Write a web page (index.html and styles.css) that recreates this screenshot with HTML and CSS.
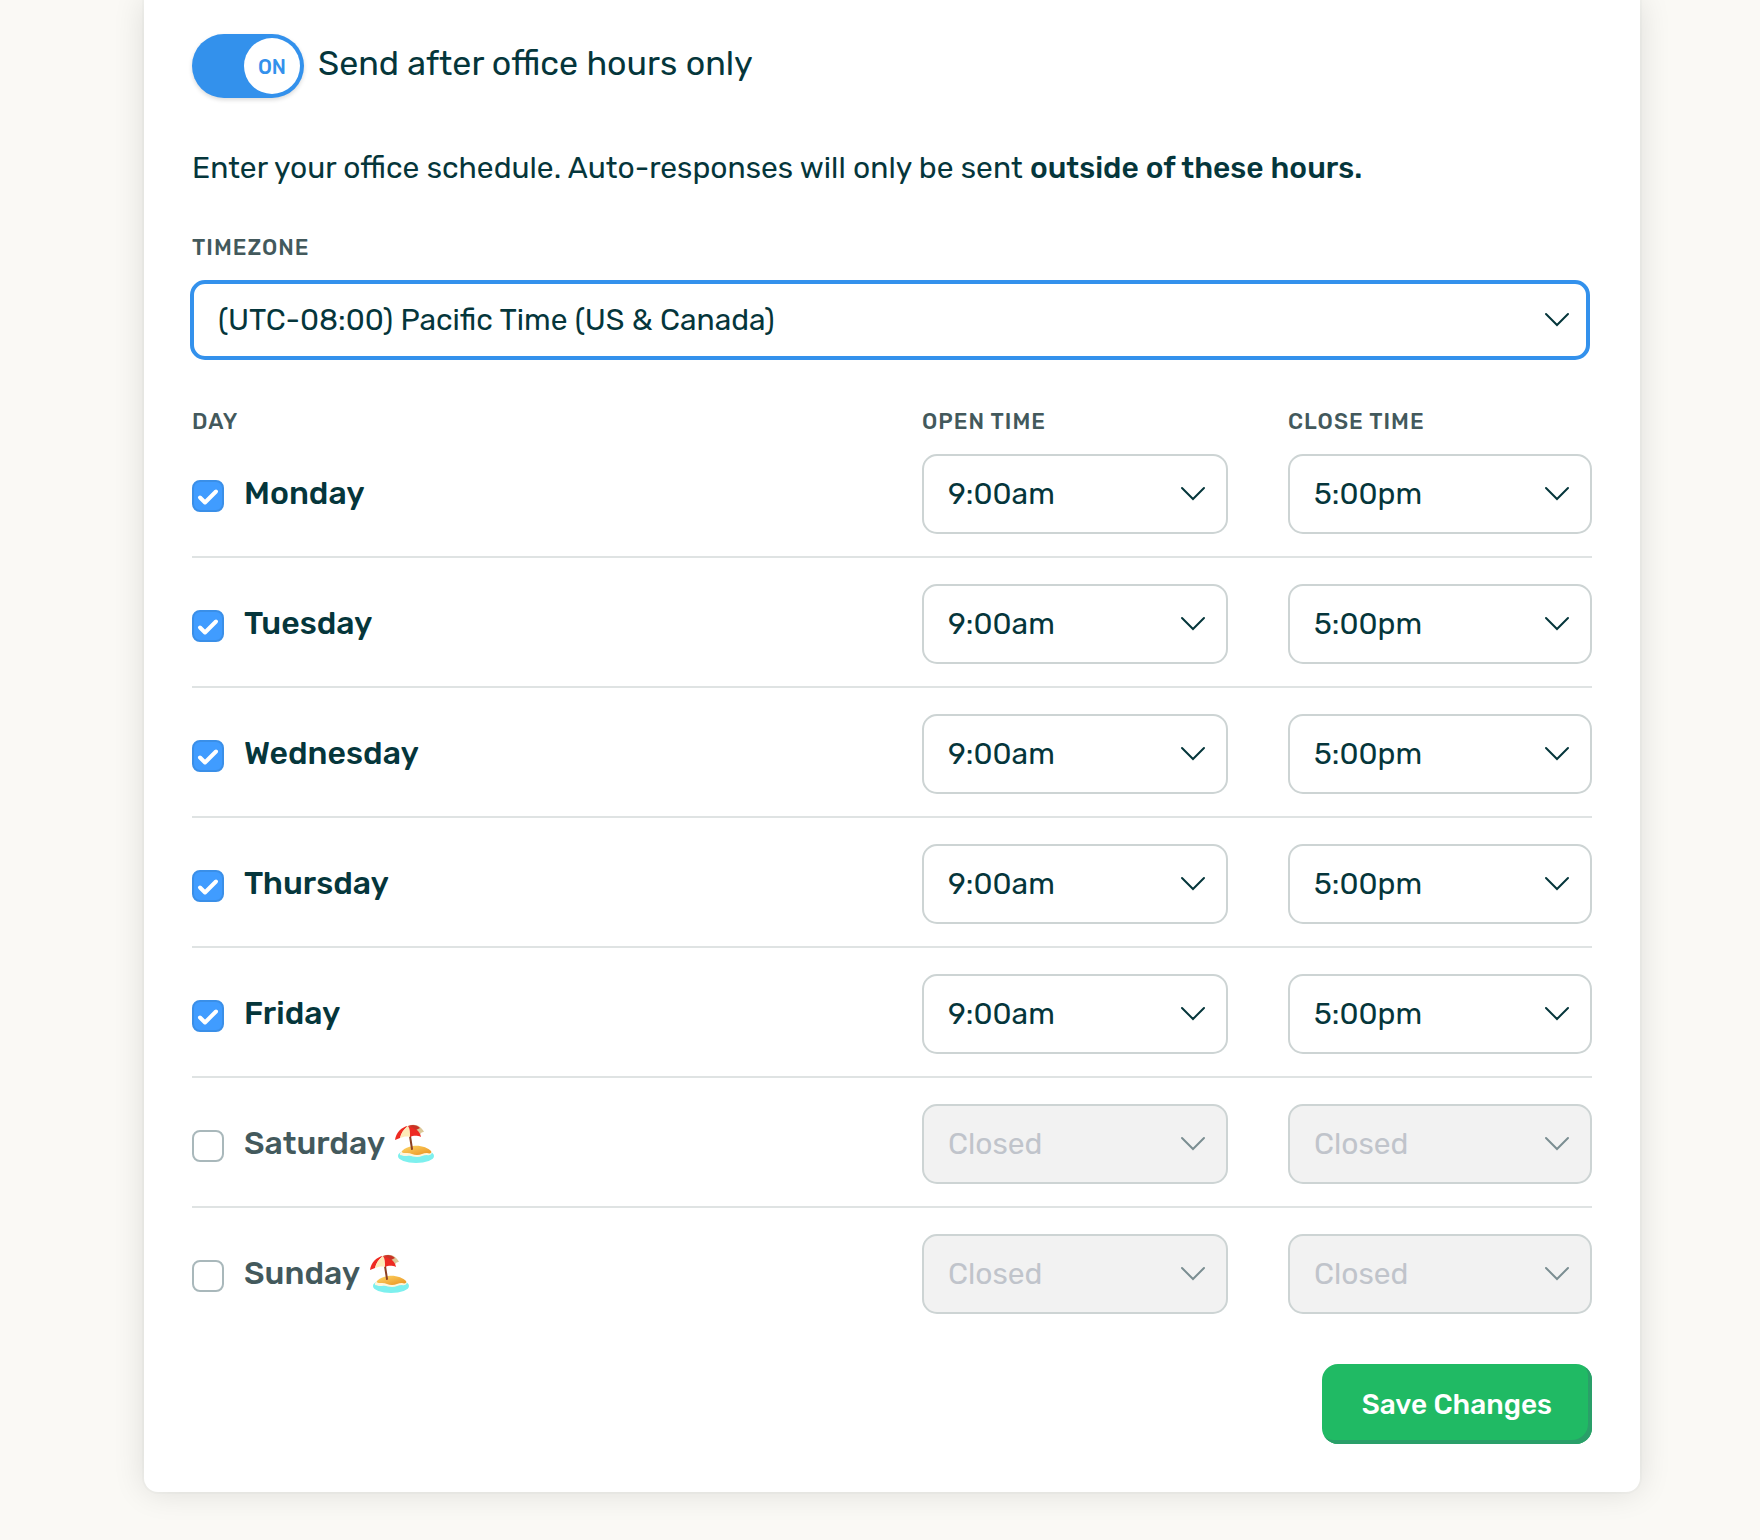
FILE: index.html
```html
<!DOCTYPE html>
<html lang="en">

<head>
  <meta charset="utf-8">
  <meta name="viewport" content="width=device-width, initial-scale=1">
  <title>Office Hours</title>
  <link rel="stylesheet" href="styles.css">
</head>

<body>
  <!-- umbrella icon shared by the weekend rows -->
  <svg class="sprite" aria-hidden="true">
    <defs>
      <linearGradient id="sand" x1="0" y1="0" x2="1" y2="1">
        <stop offset="0" stop-color="#ffd766"/>
        <stop offset="1" stop-color="#e8901f"/>
      </linearGradient>
    </defs>
    <symbol id="beach" viewBox="0 0 40 40">
      <ellipse cx="21" cy="32" rx="18" ry="7" fill="#7df0ee"/>
      <path d="M5 29c2-3 6-5 12-6 8-1 16 1 19 4 2 2 0 5-4 4-4 0-6 2-10 2-4 0-6-2-10-1-4 0-8 0-7-3z" fill="#fff6dc"/>
      <path d="M7 27c3-3 6-4 11-5 8-1 15 2 18 5 1 2-1 3-4 2-4 0-6 2-10 2s-6-2-10-2c-3 0-6 0-5-2z" fill="url(#sand)"/>
      <path d="M15 12l2 13" stroke="#8c3f22" stroke-width="2" stroke-linecap="round"/>
      <path d="M13 2c7-3 13 0 16 6-1 0-2 0-3 1l-2 3z" fill="#dcc797"/>
      <path d="M13 2C6 3 1 9 0 16l5-2c1-5 4-9 8-12z" fill="#ee2a22"/>
      <path d="M13 2C9 5 6 9 5 14c3-1 6-2 10-1 0-5 0-8-2-11z" fill="#fdeab8"/>
      <path d="M13 2c2 3 2 6 2 11 3-1 6-2 11 0-1-6-6-10-13-11z" fill="#ee2a22"/>
      <path d="M13 2c5-2 9-1 12 2l-4 2c-2-2-5-3-8-4z" fill="#c93326"/>
    </symbol>
  </svg>

  <form class="card">
    <div class="toggle-row">
      <span class="toggle">
        <input class="toggle-input" type="checkbox" role="switch" id="afterHours" checked>
        <span class="toggle-knob">ON</span>
      </span>
      <label class="toggle-label" for="afterHours">Send after office hours only</label>
    </div>

    <p class="intro">Enter your office schedule. Auto-responses will only be sent <strong>outside of these hours.</strong></p>

    <label class="caption" for="timezone">TIMEZONE</label>
    <select class="select select-active" id="timezone">
      <option>(UTC-08:00) Pacific Time (US &amp; Canada)</option>
    </select>

    <table class="schedule">
      <colgroup>
        <col>
        <col class="col-open">
        <col class="col-close">
      </colgroup>
      <thead>
        <tr>
          <th class="caption">DAY</th>
          <th class="caption">OPEN TIME</th>
          <th class="caption">CLOSE TIME</th>
        </tr>
      </thead>
      <tbody>
        <tr>
          <td><label class="day"><input class="check" type="checkbox" checked><span>Monday</span></label></td>
          <td class="open"><select class="select" aria-label="Monday open time"><option>9:00am</option></select></td>
          <td><select class="select" aria-label="Monday close time"><option>5:00pm</option></select></td>
        </tr>
        <tr>
          <td><label class="day"><input class="check" type="checkbox" checked><span>Tuesday</span></label></td>
          <td class="open"><select class="select" aria-label="Tuesday open time"><option>9:00am</option></select></td>
          <td><select class="select" aria-label="Tuesday close time"><option>5:00pm</option></select></td>
        </tr>
        <tr>
          <td><label class="day"><input class="check" type="checkbox" checked><span>Wednesday</span></label></td>
          <td class="open"><select class="select" aria-label="Wednesday open time"><option>9:00am</option></select></td>
          <td><select class="select" aria-label="Wednesday close time"><option>5:00pm</option></select></td>
        </tr>
        <tr>
          <td><label class="day"><input class="check" type="checkbox" checked><span>Thursday</span></label></td>
          <td class="open"><select class="select" aria-label="Thursday open time"><option>9:00am</option></select></td>
          <td><select class="select" aria-label="Thursday close time"><option>5:00pm</option></select></td>
        </tr>
        <tr>
          <td><label class="day"><input class="check" type="checkbox" checked><span>Friday</span></label></td>
          <td class="open"><select class="select" aria-label="Friday open time"><option>9:00am</option></select></td>
          <td><select class="select" aria-label="Friday close time"><option>5:00pm</option></select></td>
        </tr>
        <tr>
          <td><label class="day day-off"><input class="check" type="checkbox"><span>Saturday</span><svg class="beach" aria-hidden="true"><use href="#beach"/></svg></label></td>
          <td class="open"><select class="select" aria-label="Saturday open time" disabled><option>Closed</option></select></td>
          <td><select class="select" aria-label="Saturday close time" disabled><option>Closed</option></select></td>
        </tr>
        <tr>
          <td><label class="day day-off"><input class="check" type="checkbox"><span>Sunday</span><svg class="beach" aria-hidden="true"><use href="#beach"/></svg></label></td>
          <td class="open"><select class="select" aria-label="Sunday open time" disabled><option>Closed</option></select></td>
          <td><select class="select" aria-label="Sunday close time" disabled><option>Closed</option></select></td>
        </tr>
      </tbody>
    </table>

    <div class="actions">
      <button class="save" type="submit">Save Changes</button>
    </div>
  </form>
</body>

</html>
```
FILE: styles.css
```css
* {
  box-sizing: border-box;
}

body {
  margin: 0;
  padding: 0 120px 48px 144px;
  background-color: #faf9f5;
  color: #05363b;
  font-family: Rubik, Roboto, sans-serif;
  font-size: 30px;
  line-height: 40px;
}

.sprite {
  position: absolute;
  width: 0;
  height: 0;
}

.card {
  padding: 34px 48px 48px;
  background-color: #fff;
  border-radius: 0 0 14px 14px;
  box-shadow: 0 0 0 2px rgba(5, 54, 59, 0.02), 0 0 32px rgba(0, 0, 0, 0.12);
}

/* on/off switch */
.toggle-row {
  display: flex;
  align-items: center;
  gap: 14px;
}

.toggle {
  position: relative;
  width: 112px;
  height: 64px;
}

.toggle-input {
  appearance: none;
  display: block;
  width: 100%;
  height: 100%;
  margin: 0;
  border-radius: 32px;
  background-color: #3391ec;
  box-shadow: 0 2px 4px rgba(0, 0, 0, 0.15);
}

.toggle-knob {
  position: absolute;
  top: 4px;
  right: 4px;
  width: 56px;
  padding-top: 2px;
  border-radius: 50%;
  background-color: #fff;
  color: #3391ec;
  font-size: 20px;
  font-weight: 500;
  line-height: 54px;
  text-align: center;
  pointer-events: none;
}

.toggle-label {
  padding-bottom: 4px;
  font-size: 34px;
}

.intro {
  margin: 50px 0 48px;
}

.intro strong {
  font-weight: 500;
}

.caption {
  display: block;
  color: #43595c;
  font-size: 22px;
  font-weight: 500;
  letter-spacing: 1px;
  line-height: 24px;
  text-align: left;
}

/* drop-downs */
.select {
  appearance: none;
  display: block;
  width: 100%;
  height: 80px;
  padding: 0 60px 0 24px;
  border: 2px solid #cdd4d4;
  border-radius: 15px;
  background: #fff url("data:image/svg+xml,%3Csvg xmlns='http://www.w3.org/2000/svg' width='26' height='16'%3E%3Cpath d='M2 2l11 11L24 2' fill='none' stroke='%2305363b' stroke-width='2' stroke-linecap='round'/%3E%3C/svg%3E") no-repeat right 20px top 30px;
  color: #05363b;
  font: inherit;
}

.select:disabled {
  background-color: #f2f2f2;
  background-image: url("data:image/svg+xml,%3Csvg xmlns='http://www.w3.org/2000/svg' width='26' height='16'%3E%3Cpath d='M2 2l11 11L24 2' fill='none' stroke='%237b8e92' stroke-width='2' stroke-linecap='round'/%3E%3C/svg%3E");
  color: #c0c4cb;
  opacity: 1;
}

.select-active {
  margin: 20px 0 50px -2px;
  border: 4px solid #3391ec;
  background-position: right 16px top 28px;
}

/* schedule */
.schedule {
  width: 100%;
  border-collapse: collapse;
  table-layout: fixed;
}

.col-open {
  width: 366px;
}

.col-close {
  width: 304px;
}

.schedule th {
  display: table-cell;
  padding: 0;
}

.schedule td {
  padding: 26px 0 22px;
  border-bottom: 2px solid #dfe3e3;
}

.schedule tr:first-child td {
  padding-top: 20px;
}

.schedule tr:last-child td {
  padding-bottom: 0;
  border-bottom: none;
}

.schedule .open {
  padding-right: 60px;
}

.day {
  display: flex;
  align-items: center;
  font-size: 32px;
  font-weight: 500;
}

.day span {
  padding-bottom: 2px;
}

.day-off {
  color: #43595c;
}

.check {
  appearance: none;
  width: 32px;
  height: 32px;
  margin: 4px 20px 0 0;
  border: 2px solid #a9b8bb;
  border-radius: 8px;
  background-color: #fff;
}

.check:checked {
  border-color: #3a8fe8;
  background: #409cff url("data:image/svg+xml,%3Csvg xmlns='http://www.w3.org/2000/svg' width='28' height='28'%3E%3Cpath d='M6 15.500l5 5L22 9.500' fill='none' stroke='%23fff' stroke-width='4' stroke-linecap='round' stroke-linejoin='round'/%3E%3C/svg%3E") no-repeat center;
}

.beach {
  width: 40px;
  height: 40px;
  margin-left: 10px;
}

.actions {
  display: flex;
  justify-content: flex-end;
  margin-top: 50px;
}

.save {
  height: 80px;
  padding: 2px 40px 0;
  border: none;
  border-radius: 16px;
  background-color: #20ba64;
  box-shadow: inset -4px -4px 0 #2a9f69;
  color: #fff;
  font: inherit;
  font-size: 28px;
  font-weight: 500;
}
```
